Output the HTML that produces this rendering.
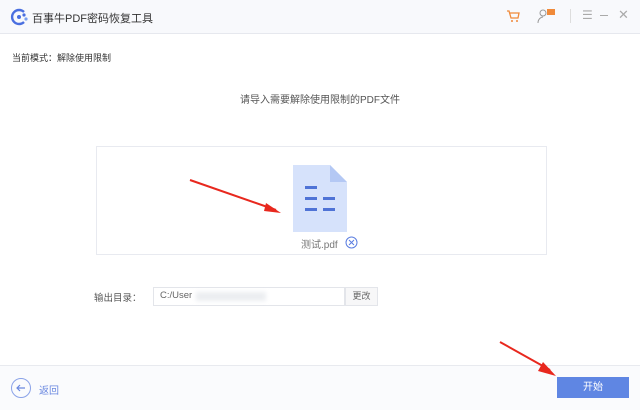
<!DOCTYPE html>
<html><head><meta charset="utf-8"><style>
body{margin:0;width:640px;height:409px;position:relative;background:#fff;font-family:"Liberation Sans","Noto Sans CJK SC",sans-serif;overflow:hidden;color:#333}
.a{position:absolute}
</style></head><body>
<div class="a" style="left:0;top:0;width:640px;height:33px;background:#f8f9fc;border-bottom:1px solid #e6e8ee"></div>
<svg class="a" style="left:10px;top:8px" width="20" height="18" viewBox="0 0 20 18"><path d="M14 4A7 7 0 1 0 14 14" fill="none" stroke="#4a6fe0" stroke-width="2.4"/><circle cx="9" cy="9" r="2" fill="#4a6fe0"/><circle cx="14" cy="7" r="1.6" fill="#4a6fe0"/><circle cx="16" cy="11" r="1.6" fill="#7aa0f0"/></svg>
<div class="a" style="left:32px;top:10px;font-size:11px;color:#333">百事牛PDF密码恢复工具</div>
<svg class="a" style="left:506px;top:9px" width="14" height="14" viewBox="0 0 14 14"><path d="M1 2h2l2 7h7l1-5H4" fill="none" stroke="#f08a3a" stroke-width="1.3"/><circle cx="6" cy="12" r="1" fill="#f08a3a"/><circle cx="11" cy="12" r="1" fill="#f08a3a"/></svg>
<svg class="a" style="left:537px;top:8px" width="20" height="16" viewBox="0 0 20 16"><circle cx="6" cy="5" r="3" fill="none" stroke="#999" stroke-width="1"/><path d="M1 15c0-4 3-6 5-6" fill="none" stroke="#999"/><rect x="10" y="1" width="8" height="6" fill="#f08a3a"/></svg>
<div class="a" style="left:570px;top:9px;width:1px;height:14px;background:#ddd"></div>
<div class="a" style="left:582px;top:8px;font-size:12px;color:#aaa">☰</div>
<div class="a" style="left:600px;top:15px;width:8px;height:1px;background:#aaa"></div>
<div class="a" style="left:618px;top:7px;font-size:13px;color:#aaa">✕</div>
<div class="a" style="left:12px;top:51px;font-size:9px;color:#333">当前模式：解除使用限制</div>
<div class="a" style="left:0;width:640px;top:91px;text-align:center;font-size:10px;color:#555">请导入需要解除使用限制的PDF文件</div>
<div class="a" style="left:96px;top:146px;width:449px;height:107px;border:1px solid #e8eaf0"></div>
<svg class="a" style="left:293px;top:165px" width="54" height="67" viewBox="0 0 54 67"><path d="M0 0H37L54 17V67H0Z" fill="#d6e2fb"/><path d="M37 0V17H54Z" fill="#b4c8f4"/><g fill="#4f73d6"><rect x="12" y="21" width="12" height="3"/><rect x="12" y="32" width="12" height="3"/><rect x="30" y="32" width="12" height="3"/><rect x="12" y="43" width="12" height="3"/><rect x="30" y="43" width="12" height="3"/></g></svg>
<svg class="a" style="left:188px;top:177px" width="95" height="38"><path d="M2 3L88 33" stroke="#e8281e" stroke-width="2"/><path d="M78 26L93 36L76 34Z" fill="#e8281e"/></svg>
<div class="a" style="left:301px;top:236px;font-size:10px;color:#777">测试.pdf</div>
<svg class="a" style="left:345px;top:236px" width="13" height="13"><circle cx="6.5" cy="6.5" r="5.5" fill="none" stroke="#5a7de0"/><path d="M4 4L9 9M9 4L4 9" stroke="#5a7de0"/></svg>
<div class="a" style="left:94px;top:290px;font-size:9.5px;color:#555">输出目录：</div>
<div class="a" style="left:153px;top:287px;width:192px;height:19px;border:1px solid #e3e5ea;box-sizing:border-box"></div>
<div class="a" style="left:160px;top:290px;font-size:9.5px;color:#666">C:/User</div>
<div class="a" style="left:196px;top:292px;width:70px;height:9px;background:#eceef1;filter:blur(2px)"></div>
<div class="a" style="left:345px;top:287px;width:33px;height:19px;border:1px solid #e3e5ea;box-sizing:border-box;background:#f7f7f8;font-size:9px;color:#666;text-align:center;line-height:17px">更改</div>
<div class="a" style="left:0;top:365px;width:640px;height:44px;background:#fafbfd;border-top:1px solid #e8eaef"></div>
<svg class="a" style="left:498px;top:340px" width="60" height="38"><path d="M2 2L52 30" stroke="#e8281e" stroke-width="2"/><path d="M45 22L58 36L40 31Z" fill="#e8281e"/></svg>
<svg class="a" style="left:10px;top:377px" width="22" height="22"><circle cx="11" cy="11" r="9.5" fill="none" stroke="#8aa2e8"/><path d="M7 11H15M10 8L7 11L10 14" fill="none" stroke="#6a88e0" stroke-width="1.2"/></svg>
<div class="a" style="left:39px;top:382px;font-size:10px;color:#6a88e0">返回</div>
<div class="a" style="left:557px;top:377px;width:72px;height:21px;background:#5f86e3;color:#fff;font-size:10px;text-align:center;line-height:21px">开始</div>
</body></html>
